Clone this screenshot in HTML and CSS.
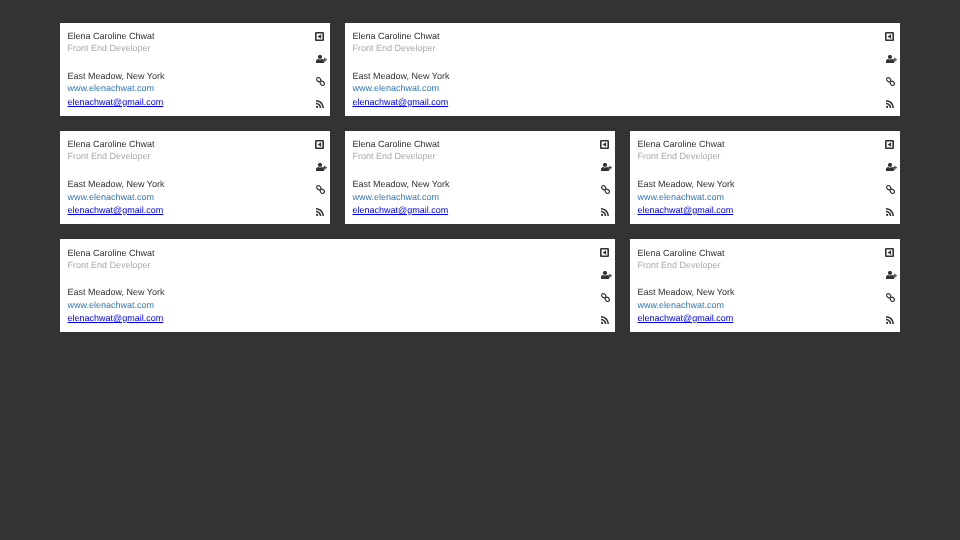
FILE: index.html
```html
<!DOCTYPE html>
<html lang="en">
<head>
<meta charset="utf-8">
<title>Contact cards</title>
<link rel="stylesheet" href="styles.css">
</head>
<body>
<svg class="defs" width="0" height="0" aria-hidden="true">
  <symbol id="i-back" viewBox="0 0 9 9">
    <path fill-rule="evenodd" d="M1.3 0h6.400C8.400 0 9 .6 9 1.300v6.400C9 8.400 8.400 9 7.700 9H1.300C.6 9 0 8.400 0 7.700V1.300C0 .6.600 0 1.300 0zM1.600 1.500v6h5.800v-6z"/>
    <path d="M6.100 2.200v4.600L2.600 4.500z"/>
  </symbol>
  <symbol id="i-user" viewBox="0 0 11 8">
    <circle cx="4" cy="2" r="2.100"/>
    <path d="M0 8V6.300C0 4.900 1 4 2.200 3.900 3.300 4.700 4.700 4.700 5.800 3.900 7 4 8 4.900 8 6.300V8z"/>
    <path d="M8.300 2.800h1.100v1.400H11v1.100H9.400v1.400H8.300V5.300H6.800V4.200h1.500z"/>
  </symbol>
  <symbol id="i-link" viewBox="0 0 9 9">
    <g fill="none" stroke="currentColor" stroke-width="1.150">
      <ellipse cx="2.700" cy="2.700" rx="2.300" ry="1.800" transform="rotate(45 2.700 2.700)"/>
      <ellipse cx="6.300" cy="6.300" rx="2.300" ry="1.800" transform="rotate(45 6.300 6.300)"/>
    </g>
  </symbol>
  <symbol id="i-rss" viewBox="0 0 8 8">
    <circle cx="1.100" cy="6.900" r="1.100"/>
    <path d="M0 2.700v1.600C2 4.300 3.700 6 3.700 8h1.600C5.300 5.100 2.900 2.700 0 2.700z"/>
    <path d="M0 0v1.600C3.500 1.600 6.400 4.500 6.400 8H8C8 3.600 4.400 0 0 0z"/>
  </symbol>
</svg>
<main class="grid">
  <article class="card">
    <div class="info">
      <p class="name">Elena Caroline Chwat</p>
      <p class="role">Front End Developer</p>
      <p class="place">East Meadow, New York</p>
      <p class="site">www.elenachwat.com</p>
      <p class="mail"><a href="#">elenachwat@gmail.com</a></p>
    </div>
    <div class="icons">
      <svg class="ico back"><use href="#i-back"/></svg>
      <svg class="ico user"><use href="#i-user"/></svg>
      <svg class="ico link"><use href="#i-link"/></svg>
      <svg class="ico rss"><use href="#i-rss"/></svg>
    </div>
  </article>
  <article class="card span2">
    <div class="info">
      <p class="name">Elena Caroline Chwat</p>
      <p class="role">Front End Developer</p>
      <p class="place">East Meadow, New York</p>
      <p class="site">www.elenachwat.com</p>
      <p class="mail"><a href="#">elenachwat@gmail.com</a></p>
    </div>
    <div class="icons">
      <svg class="ico back"><use href="#i-back"/></svg>
      <svg class="ico user"><use href="#i-user"/></svg>
      <svg class="ico link"><use href="#i-link"/></svg>
      <svg class="ico rss"><use href="#i-rss"/></svg>
    </div>
  </article>
  <article class="card">
    <div class="info">
      <p class="name">Elena Caroline Chwat</p>
      <p class="role">Front End Developer</p>
      <p class="place">East Meadow, New York</p>
      <p class="site">www.elenachwat.com</p>
      <p class="mail"><a href="#">elenachwat@gmail.com</a></p>
    </div>
    <div class="icons">
      <svg class="ico back"><use href="#i-back"/></svg>
      <svg class="ico user"><use href="#i-user"/></svg>
      <svg class="ico link"><use href="#i-link"/></svg>
      <svg class="ico rss"><use href="#i-rss"/></svg>
    </div>
  </article>
  <article class="card">
    <div class="info">
      <p class="name">Elena Caroline Chwat</p>
      <p class="role">Front End Developer</p>
      <p class="place">East Meadow, New York</p>
      <p class="site">www.elenachwat.com</p>
      <p class="mail"><a href="#">elenachwat@gmail.com</a></p>
    </div>
    <div class="icons">
      <svg class="ico back"><use href="#i-back"/></svg>
      <svg class="ico user"><use href="#i-user"/></svg>
      <svg class="ico link"><use href="#i-link"/></svg>
      <svg class="ico rss"><use href="#i-rss"/></svg>
    </div>
  </article>
  <article class="card">
    <div class="info">
      <p class="name">Elena Caroline Chwat</p>
      <p class="role">Front End Developer</p>
      <p class="place">East Meadow, New York</p>
      <p class="site">www.elenachwat.com</p>
      <p class="mail"><a href="#">elenachwat@gmail.com</a></p>
    </div>
    <div class="icons">
      <svg class="ico back"><use href="#i-back"/></svg>
      <svg class="ico user"><use href="#i-user"/></svg>
      <svg class="ico link"><use href="#i-link"/></svg>
      <svg class="ico rss"><use href="#i-rss"/></svg>
    </div>
  </article>
  <article class="card span2">
    <div class="info">
      <p class="name">Elena Caroline Chwat</p>
      <p class="role">Front End Developer</p>
      <p class="place">East Meadow, New York</p>
      <p class="site">www.elenachwat.com</p>
      <p class="mail"><a href="#">elenachwat@gmail.com</a></p>
    </div>
    <div class="icons">
      <svg class="ico back"><use href="#i-back"/></svg>
      <svg class="ico user"><use href="#i-user"/></svg>
      <svg class="ico link"><use href="#i-link"/></svg>
      <svg class="ico rss"><use href="#i-rss"/></svg>
    </div>
  </article>
  <article class="card">
    <div class="info">
      <p class="name">Elena Caroline Chwat</p>
      <p class="role">Front End Developer</p>
      <p class="place">East Meadow, New York</p>
      <p class="site">www.elenachwat.com</p>
      <p class="mail"><a href="#">elenachwat@gmail.com</a></p>
    </div>
    <div class="icons">
      <svg class="ico back"><use href="#i-back"/></svg>
      <svg class="ico user"><use href="#i-user"/></svg>
      <svg class="ico link"><use href="#i-link"/></svg>
      <svg class="ico rss"><use href="#i-rss"/></svg>
    </div>
  </article>
</main>
</body>
</html>
```
FILE: styles.css
```css
html, body {
  margin: 0;
  height: 100%;
}
body {
  background: #333333;
  font-family: "Liberation Sans", Arial, sans-serif;
  font-size: 9px;
  color: #333333;
  text-rendering: geometricPrecision;
}
.defs {
  position: absolute;
}
.grid {
  display: grid;
  grid-template-columns: repeat(3, 270px);
  grid-auto-rows: 93.1px;
  gap: 15px;
  padding: 23px 60px 0;
  filter: blur(0.3px);
}
.card {
  display: flex;
  justify-content: space-between;
  background: #ffffff;
  box-sizing: border-box;
  padding: 7.35px 4px 8px 7.5px;
}
.span2 {
  grid-column: span 2;
}
.info p {
  margin: 0;
  line-height: 12.857px;
}
.info .name,
.info .role {
  line-height: 12px;
}
.info .role {
  color: #aaaaaa;
  margin-bottom: 15.22px;
}
.site {
  color: #337ab7;
}
.info .mail {
  margin-top: 0.65px;
}
.mail a {
  color: #0000ee;
}
.icons {
  display: flex;
  flex-direction: column;
  justify-content: space-between;
  align-items: flex-start;
  width: 11px;
  padding-top: 1.65px;
}
.ico {
  display: block;
  fill: #333333;
  color: #333333;
}
.back { width: 9px; height: 9px; }
.user { width: 11px; height: 8px; margin-left: 0.5px; }
.link { width: 9px; height: 9px; margin-left: 0.5px; }
.rss { width: 8px; height: 8px; margin-left: 0.5px; }
```
